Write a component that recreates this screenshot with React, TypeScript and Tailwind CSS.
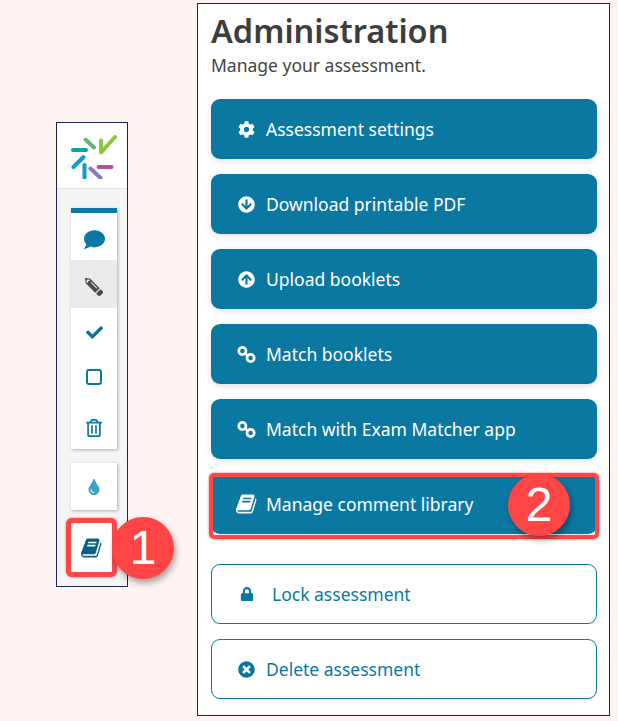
import type { ReactNode } from "react";
import {
  FaArrowCircleDown,
  FaArrowCircleUp,
  FaCheck,
  FaCog,
  FaComment,
  FaLock,
  FaPencilAlt,
  FaRegTrashAlt,
  FaTimesCircle,
  FaTint,
} from "react-icons/fa";

function Logo() {
  return (
    <svg width="46" height="46" viewBox="0 0 46 46" fill="none" strokeLinecap="round" strokeLinejoin="round" strokeWidth="4">
      <path d="M2 17h13" stroke="#00a79d" />
      <path d="M14.5 6.5l8.5 8" stroke="#5cb878" />
      <path d="M30 7.5v12L44 4" stroke="#8cc63f" />
      <path d="M2.5 34l10-10" stroke="#0e9bd0" />
      <path d="M13.5 32v12.5" stroke="#0e9bd0" />
      <path d="M19.5 35.5l10 9.5" stroke="#8a78bd" />
      <path d="M27.5 34h13" stroke="#b5519c" />
    </svg>
  );
}

// slanted book, the package's FaBook is upright
function BookIcon({ className }: { className?: string }) {
  return (
    <svg className={`shrink-0 ${className ?? ""}`} viewBox="0 0 1792 1792" width="1em" height="1em" fill="currentColor">
      <path d="M1639 478q40 57 18 129l-275 906q-19 64-76.5 107.5t-122.5 43.5h-923q-77 0-148.5-53.5t-99.5-131.5q-24-67-2-127 0-4 3-27t4-37q1-8-3-21.5t-3-19.5q2-11 8-21t16.5-23.5 16.5-23.5q23-38 45-91.5t30-91.5q3-10 .5-30t-.5-28q3-11 17-28t17-23q21-36 42-92t25-90q1-9-2.5-32t.5-28q4-13 22-30.5t22-22.5q19-26 42.5-84.5t27.5-96.5q1-8-3-25.5t-2-26.5q2-8 9-18t18-23 17-21q8-12 16.5-30.5t15-35 16-36 19.5-32 26.5-23.5 36-11.5 47.5 5.5l-1 3q38-9 51-9h761q74 0 114 56t18 130l-274 906q-36 119-71.5 153.5t-128.5 34.5h-869q-27 0-38 15-11 16-1 43 24 70 144 70h923q29 0 56-15.5t35-41.5l300-987q7-22 5-57 38 15 59 43zm-1064 2q-4 13 2 22.5t20 9.5h608q13 0 25.5-9.5t16.5-22.5l21-64q4-13-2-22.5t-20-9.5h-608q-13 0-25.5 9.5t-16.5 22.5zm-83 256q-4 13 2 22.5t20 9.5h608q13 0 25.5-9.5t16.5-22.5l21-64q4-13-2-22.5t-20-9.5h-608q-13 0-25.5 9.5t-16.5 22.5z" />
    </svg>
  );
}

// two rings running top-left to bottom-right
function ChainIcon() {
  return (
    <svg width="19" height="17" viewBox="0 0 19 17" fill="none" stroke="currentColor" strokeWidth="2.7" className="shrink-0">
      <circle cx="5.4" cy="5" r="3.6" />
      <circle cx="13.6" cy="12" r="3.6" />
      <path d="M7.5 7l4 3.2" strokeWidth="2.4" />
    </svg>
  );
}

function Badge({ children, className }: { children: ReactNode; className: string }) {
  return (
    <div
      className={`absolute z-10 flex h-[62px] w-[62px] items-center justify-center rounded-full bg-[#ff4545] font-['Liberation_Sans',sans-serif] text-[48px] leading-none text-white shadow-[2px_4px_6px_rgba(0,0,0,0.35)] ${className}`}
    >
      {children}
    </div>
  );
}

function Sidebar() {
  return (
    <div className="relative ml-[56px] mt-[122px] h-[465px] w-[72px] shrink-0 border border-[#1a2456] bg-[#f5f5f5]">
      <div className="flex h-[66px] items-center justify-center border-b border-[#e2e2e2] bg-white pl-[3px]">
        <Logo />
      </div>
      <div className="ml-[14px] mt-[19px] w-[46px] border-t-[5px] border-[#0b78a1] bg-white shadow-[1px_1px_3px_rgba(0,0,0,0.3)]">
        <div className="flex h-[47px] items-center justify-center pt-[5px]">
          <FaComment className="text-[21px] text-[#0b78a1]" />
        </div>
        <div className="flex h-[48px] items-center justify-center bg-[#ebebeb] pt-[5px]">
          <FaPencilAlt className="rotate-90 text-[18px] text-[#4a4a4a]" />
        </div>
        <div className="flex h-[48px] items-center justify-center">
          <FaCheck className="text-[17px] text-[#0b6f96]" />
        </div>
        <div className="flex h-[40px] items-center justify-center pt-[2px]">
          <svg width="18" height="18" viewBox="0 0 18 18" fill="none" stroke="#0b78a1" strokeWidth="2">
            <rect x="2" y="2" width="14" height="14" rx="2" />
          </svg>
        </div>
        <div className="flex h-[53px] items-center justify-center pt-[11px]">
          <FaRegTrashAlt className="text-[18px] text-[#0b78a1]" />
        </div>
      </div>
      <div className="ml-[14px] mt-[14px] flex h-[47px] w-[46px] items-center justify-center bg-white shadow-[1px_1px_3px_rgba(0,0,0,0.3)]">
        <FaTint className="text-[16px] text-[#3ba3c4]" />
      </div>
      <div className="ml-[9px] mt-[8px] flex h-[59px] w-[51px] items-center justify-center rounded-[6px] border-[5px] border-[#ff4747] bg-white shadow-[0_0_2px_#ff4747]">
        <BookIcon className="text-[22px] text-[#0b5f80]" />
      </div>
      <Badge className="left-[55px] top-[394px]">1</Badge>
    </div>
  );
}

function ActionButton({
  icon,
  label,
  outline,
  gap,
}: {
  icon: ReactNode;
  label: string;
  outline?: boolean;
  gap?: string;
}) {
  return (
    <button
      className={`flex h-[60px] w-[386px] items-center rounded-[9px] text-left text-[17.5px] ${
        outline
          ? "border border-[#0b78a1] bg-white pl-[25px] text-[#0b78a1]"
          : "bg-[#0b78a1] pl-[26px] text-white shadow-[0_2px_6px_rgba(0,0,0,0.12)]"
      }`}
    >
      <span className={`flex w-[19px] shrink-0 items-center justify-center text-[17px] ${gap ?? "mr-[10px]"}`}>{icon}</span>
      {label}
    </button>
  );
}

function AdminPanel() {
  return (
    <div className="relative ml-[69px] mt-[3px] h-[713px] w-[413px] shrink-0 border border-[#1a2456] bg-white pl-[13px] font-['Noto_Sans',sans-serif]">
      <h1 className="mt-[5px] text-[32.5px] font-semibold leading-[44px] text-[#3d3d3d]">Administration</h1>
      <p className="text-[17.5px] leading-[24px] text-[#444]">Manage your assessment.</p>
      <div className="mt-[22px] flex flex-col gap-[15px]">
        <ActionButton icon={<FaCog />} label="Assessment settings" />
        <ActionButton icon={<FaArrowCircleDown />} label="Download printable PDF" />
        <ActionButton icon={<FaArrowCircleUp />} label="Upload booklets" />
        <ActionButton icon={<ChainIcon />} label="Match booklets" />
        <ActionButton icon={<ChainIcon />} label="Match with Exam Matcher app" />
        <ActionButton icon={<BookIcon className="text-[22px]" />} label="Manage comment library" />
      </div>
      <div className="mt-[30px] flex flex-col gap-[15px]">
        <ActionButton outline icon={<FaLock className="text-[14px]" />} label="Lock assessment" gap="mr-[16px]" />
        <ActionButton outline icon={<FaTimesCircle />} label="Delete assessment" />
      </div>
      <div className="absolute left-[11px] top-[469px] h-[66px] w-[390px] rounded-[5px] border-[4px] border-[#ff4747] shadow-[0_0_2px_#ff4747]" />
      <Badge className="left-[310px] top-[470px]">2</Badge>
    </div>
  );
}

export default function App() {
  return (
    <div className="flex h-[721px] w-[618px] items-start overflow-hidden bg-[#fff4f2]">
      <Sidebar />
      <AdminPanel />
    </div>
  );
}
